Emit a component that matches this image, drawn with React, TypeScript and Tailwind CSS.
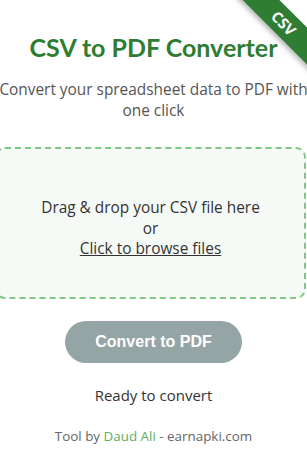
export default function App() {
  return (
    <div className="relative min-h-screen overflow-hidden bg-white font-['Open_Sans',sans-serif]">
      {/* corner ribbon */}
      <div className="absolute right-[-42px] top-[10px] h-[26px] w-[130px] rotate-45 bg-[#2e7d32] text-center text-[15px] font-bold leading-[26px] text-white shadow-[0_3px_5px_rgba(0,0,0,0.28)]">
        CSV
      </div>

      <div className="flex flex-col items-center pt-[30px]">
        <h1 className="text-[25px] font-bold leading-[34px] text-[#2e7d32] font-['Lato',sans-serif]">CSV to PDF Converter</h1>
        <p className="mt-[15px] w-[320px] shrink-0 text-center text-[15.4px] leading-[21px] text-[#555]">
          Convert your spreadsheet data to PDF with one click
        </p>

        <div className="mt-[26px] flex h-[152px] w-[311px] shrink-0 flex-col items-center justify-center self-start -ml-[5px] rounded-[10px] border-2 border-dashed border-[#81c784] bg-[#f6faf6] pt-[12px] text-center text-[15.4px] leading-[20.5px] text-[#333]">
          <p>Drag &amp; drop your CSV file here</p>
          <p>or</p>
          <p className="underline">Click to browse files</p>
        </div>

        <button className="mt-[22px] h-[42px] w-[177px] rounded-full bg-[#95a5a6] text-[16px] font-bold text-white font-['Liberation_Sans',sans-serif]">
          Convert to PDF
        </button>

        <p className="mt-[22px] text-[15px] leading-[20px] text-[#333]">Ready to convert</p>

        <p className="mt-[22px] text-[13.4px] leading-[18px] text-[#666]">
          Tool by <span className="text-[#5fae62]">Daud Ali</span> - earnapki.com
        </p>
      </div>
    </div>
  );
}
